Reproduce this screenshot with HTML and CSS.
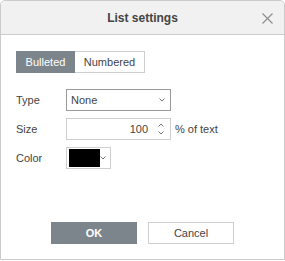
FILE: index.html
```html
<!DOCTYPE html>
<html lang="en">
<head>
  <meta charset="UTF-8" />
  <title>List settings</title>
  <link rel="stylesheet" href="styles.css">
</head>
<body>
  <div class="dialog">
    <header class="dialog-header">
      <h1>List settings</h1>
      <span class="close">
        <svg width="11" height="11" viewBox="0 0 11 11"><path d="M0.5 0.5L10.5 10.5M10.5 0.5L0.5 10.5" stroke="#8f8f8f" stroke-width="1.2" fill="none"/></svg>
      </span>
    </header>

    <div class="dialog-body">
      <div class="segment">
        <button class="seg active">Bulleted</button>
        <button class="seg">Numbered</button>
      </div>

      <div class="row">
        <label>Type</label>
        <div class="field select">
          <span>None</span>
          <svg class="caret" width="6" height="4" viewBox="0 0 6 4"><path d="M0.5 0.5L3 3L5.5 0.5" stroke="#777" fill="none"/></svg>
        </div>
      </div>

      <div class="row">
        <label>Size</label>
        <div class="field spin">
          <span class="num">100</span>
          <span class="arrows">
            <svg width="6" height="4" viewBox="0 0 6 4"><path d="M0.5 3.5L3 1L5.5 3.5" stroke="#777" fill="none"/></svg>
            <svg width="6" height="4" viewBox="0 0 6 4"><path d="M0.5 0.5L3 3L5.5 0.5" stroke="#777" fill="none"/></svg>
          </span>
        </div>
        <span class="unit">% of text</span>
      </div>

      <div class="row">
        <label>Color</label>
        <div class="field color">
          <span class="swatch"></span>
          <svg class="caret" width="6" height="4" viewBox="0 0 6 4"><path d="M0.5 0.5L3 3L5.5 0.5" stroke="#777" fill="none"/></svg>
        </div>
      </div>
    </div>

    <footer class="dialog-footer">
      <button class="btn primary">OK</button>
      <button class="btn">Cancel</button>
    </footer>
  </div>
</body>
</html>
```

FILE: styles.css
```css
body {
  margin: 0;
  background: #fff;
  font-family: 'Liberation Sans', Arial, sans-serif;
  font-size: 11px;
  color: #444;
}

.dialog {
  width: 285px;
  height: 260px;
  box-sizing: border-box;
  border: 1px solid #cbcbcb;
  border-radius: 5px 5px 0 0;
  display: flex;
  flex-direction: column;
  background: #fff;
}

.dialog-header {
  height: 33px;
  background: #f1f1f1;
  border-bottom: 1px solid #cbcbcb;
  border-radius: 5px 5px 0 0;
  display: flex;
  align-items: center;
  justify-content: center;
  position: relative;
}

.dialog-header h1 {
  margin: 0;
  font-size: 12px;
  font-weight: bold;
  color: #444;
}

.close {
  position: absolute;
  right: 11px;
  top: 12px;
  line-height: 0;
}

.dialog-body {
  padding: 16px 15px 0;
  flex: 1;
}

.segment {
  display: flex;
  margin-bottom: 16px;
}

.seg {
  height: 22px;
  padding: 0;
  font: inherit;
  font-size: 11px;
  border: 1px solid #cfcfcf;
  background: #fff;
  color: #444;
}

.seg:first-child {
  width: 59px;
}

.seg:last-child {
  width: 70px;
  border-left: none;
}

.seg.active {
  background: #7d858c;
  border-color: #7d858c;
  color: #fff;
}

.row {
  display: flex;
  align-items: center;
  height: 22px;
  margin-bottom: 7px;
}

.row label {
  width: 50px;
}

.field {
  height: 22px;
  box-sizing: border-box;
  border: 1px solid #cfcfcf;
  display: flex;
  align-items: center;
}

.select {
  width: 105px;
  border-color: #9a9a9a;
  padding: 0 5px 0 4px;
  justify-content: space-between;
}

.spin {
  width: 105px;
  justify-content: flex-end;
  padding-right: 4px;
}

.spin .num {
  margin-right: 8px;
}

.arrows {
  display: flex;
  flex-direction: column;
  gap: 4px;
  width: 10px;
  align-items: center;
}

.arrows svg {
  display: block;
}

.unit {
  margin-left: 4px;
}

.color {
  width: 45px;
  padding: 0 4px 0 2px;
  justify-content: space-between;
}

.swatch {
  width: 31px;
  height: 18px;
  background: #000;
}

.dialog-footer {
  display: flex;
  justify-content: center;
  gap: 11px;
  padding-bottom: 15px;
}

.btn {
  width: 86px;
  height: 22px;
  padding: 0;
  font: inherit;
  font-size: 11px;
  border: 1px solid #cfcfcf;
  background: #fff;
  color: #444;
}

.btn.primary {
  background: #7d858c;
  border-color: #7d858c;
  color: #fff;
  font-weight: bold;
}
```
